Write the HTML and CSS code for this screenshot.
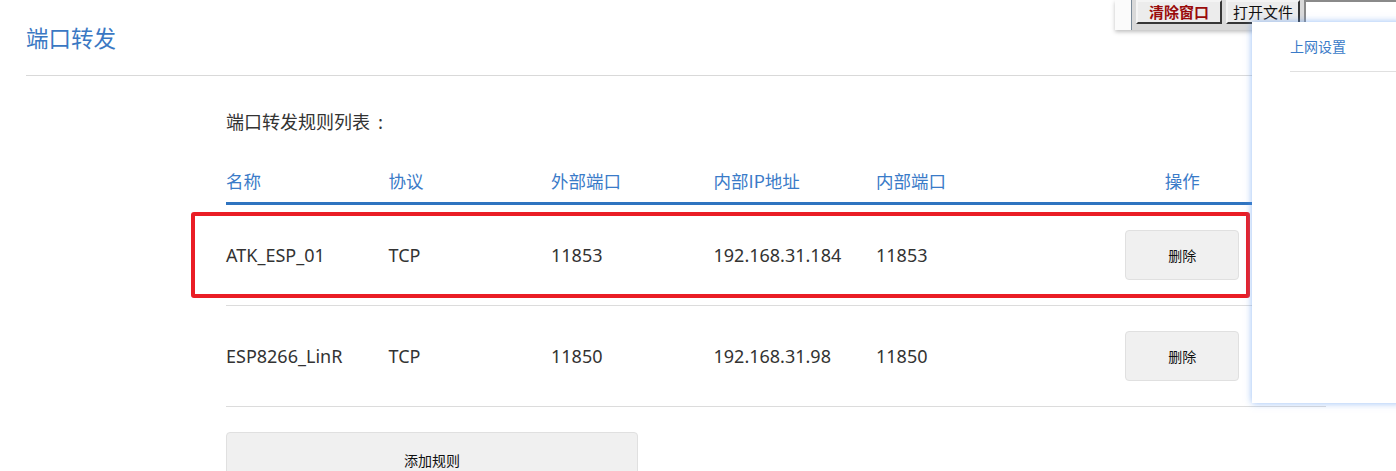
FILE: index.html
```html
<!DOCTYPE html>
<html lang="zh-CN">
<head>
<meta charset="utf-8">
<title>端口转发</title>
<link rel="stylesheet" href="styles.css">
</head>
<body>
<div class="page">
  <div class="page-head">
    <h1 class="page-title">端口转发</h1>
  </div>
  <div class="content">
    <div class="section-title">端口转发规则列表<span class="colon">:</span></div>
    <div class="table">
      <div class="row head">
        <div class="cell">名称</div>
        <div class="cell">协议</div>
        <div class="cell">外部端口</div>
        <div class="cell">内部IP地址</div>
        <div class="cell">内部端口</div>
        <div class="cell op">操作</div>
      </div>
      <div class="row">
        <div class="cell">ATK_ESP_01</div>
        <div class="cell">TCP</div>
        <div class="cell">11853</div>
        <div class="cell">192.168.31.184</div>
        <div class="cell">11853</div>
        <div class="cell op"><button class="btn btn-del">删除</button></div>
      </div>
      <div class="row">
        <div class="cell">ESP8266_LinR</div>
        <div class="cell">TCP</div>
        <div class="cell">11850</div>
        <div class="cell">192.168.31.98</div>
        <div class="cell">11850</div>
        <div class="cell op"><button class="btn btn-del">删除</button></div>
      </div>
    </div>
    <button class="btn btn-add">添加规则</button>
  </div>
</div>

<div class="highlight"></div>

<div class="toolbar">
  <div class="tb-white"></div>
  <div class="tb-gray">
    <button class="tb-btn tb-clear">清除窗口</button>
    <button class="tb-btn">打开文件</button>
    <div class="tb-input"></div>
  </div>
</div>

<div class="side-panel">
  <a class="side-link">上网设置</a>
  <div class="side-line"></div>
</div>
</body>
</html>
```

FILE: styles.css
```css
html, body {
  margin: 0;
  padding: 0;
  background: #ffffff;
  overflow: hidden;
}
body {
  font-family: "Noto Sans", "Noto Sans CJK SC", sans-serif;
  color: #333333;
  width: 1396px;
  height: 471px;
  position: relative;
}
.page-head {
  margin-left: 26px;
  border-bottom: 1px solid #d9d9d9;
  height: 76px;
  box-sizing: border-box;
  padding-top: 22px;
}
.page-title {
  margin: 0;
  font-family: "Noto Sans CJK SC", sans-serif;
  font-weight: normal;
  font-size: 22.5px;
  line-height: 30px;
  color: #3a78c3;
}
.content {
  margin-left: 226px;
  width: 1100px;
}
.section-title {
  margin-top: 33px;
  font-family: "Noto Sans CJK SC", sans-serif;
  font-size: 18px;
  line-height: 24px;
  color: #333;
}
.colon {
  margin-left: 8px;
}
.table {
  margin-top: 29px;
}
.row {
  display: grid;
  grid-template-columns: 162.5px 162.5px 162.5px 162.5px 162.5px 1fr;
  align-items: center;
  height: 101px;
  border-bottom: 1px solid #dcdcdc;
  box-sizing: border-box;
  font-size: 18px;
  color: #333;
}
.row.head {
  height: 43px;
  padding-bottom: 3px;
  border-bottom: 3px solid #2f74c0;
  color: #3a7bc8;
  font-family: "Noto Sans CJK SC", sans-serif;
  font-size: 17.5px;
}
.cell.op {
  text-align: center;
}
.btn {
  font-family: "Noto Sans CJK SC", sans-serif;
  font-size: 14px;
  color: #111;
  background: #f0f0f0;
  border: 1px solid #e0e0e0;
  border-radius: 4px;
  padding: 0;
  cursor: pointer;
}
.btn-del {
  width: 114px;
  height: 50px;
}
.btn-add {
  display: block;
  margin-top: 25px;
  width: 412px;
  height: 55px;
}
.highlight {
  position: absolute;
  left: 191px;
  top: 212px;
  width: 1059px;
  height: 86px;
  box-sizing: border-box;
  border: 4px solid #ea1d25;
  border-radius: 3px;
}
.toolbar {
  position: absolute;
  left: 1115px;
  top: 0;
  width: 281px;
  height: 30px;
  display: flex;
  box-shadow: 0 2px 4px rgba(0, 0, 0, 0.25);
}
.tb-white {
  width: 16px;
  background: #fbfbfb;
}
.tb-gray {
  flex: 1;
  display: flex;
  align-items: flex-start;
  gap: 4px;
  background: #d9d9d9;
  border-left: 1px solid #7a8a99;
  padding-left: 4px;
}
.tb-btn {
  height: 24px;
  padding: 0 5px;
  font-family: "Noto Sans CJK SC", sans-serif;
  font-size: 15px;
  line-height: 20px;
  color: #111;
  background: #ececec;
  border: 2px outset #f4f4f4;
  border-right-color: #8a8a8a;
  border-bottom-color: #8a8a8a;
  border-radius: 0;
}
.tb-clear {
  width: 86px;
  color: #9a0b0b;
  font-weight: bold;
}
.tb-input {
  flex: 1;
  height: 22px;
  background: #ffffff;
  border-top: 2px solid #8a8a8a;
  border-left: 2px solid #8a8a8a;
}
.side-panel {
  position: absolute;
  left: 1252px;
  top: 22px;
  width: 150px;
  height: 381px;
  background: #ffffff;
  box-shadow: 0 0 7px rgba(90, 150, 240, 0.65);
  padding-left: 38px;
  box-sizing: border-box;
}
.side-link {
  display: block;
  margin-top: 14px;
  font-family: "Noto Sans CJK SC", sans-serif;
  font-size: 14px;
  line-height: 20px;
  color: #3a7bc8;
}
.side-line {
  margin-top: 15px;
  border-top: 1px solid #e0e0e0;
}
```
